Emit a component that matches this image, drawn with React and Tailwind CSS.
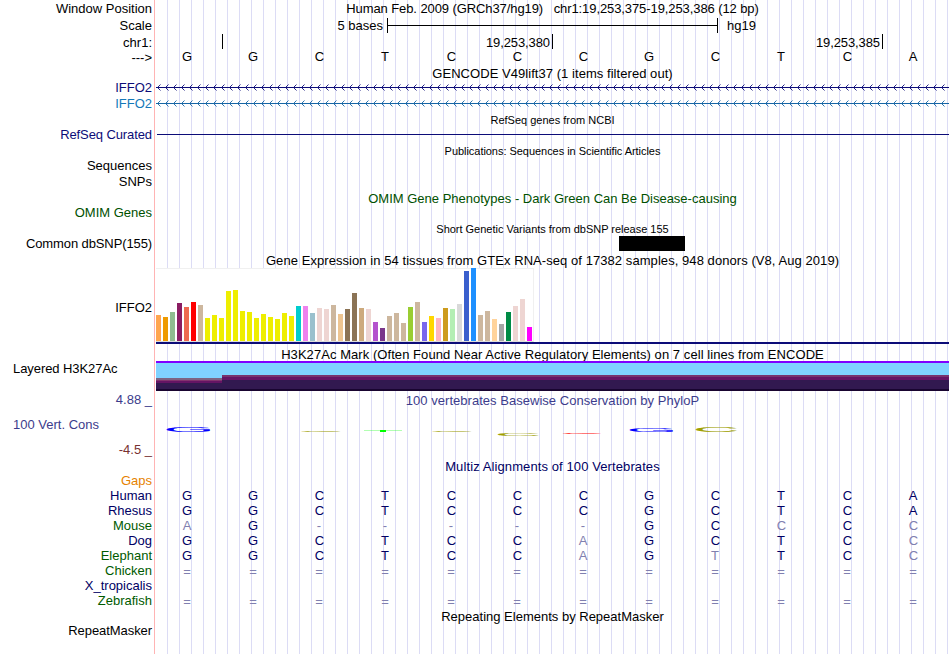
import React from 'react';

const BASES = 'GGCTCCCGCTCA';

const SPECIES = [
  { name: 'Human', color: 'text-[#000064]', seq: 'GGCTCCCGCTCA' },
  { name: 'Rhesus', color: 'text-[#000064]', seq: 'GGCTCCCGCTCA' },
  { name: 'Mouse', color: 'text-[#005a00]', seq: 'AG-----GCCCC' },
  { name: 'Dog', color: 'text-[#000064]', seq: 'GGCTCCAGCTCC' },
  { name: 'Elephant', color: 'text-[#005a00]', seq: 'GGCTCCAGTTCC' },
  { name: 'Chicken', color: 'text-[#005a00]', seq: '============' },
  { name: 'X_tropicalis', color: 'text-[#000064]', seq: '            ' },
  { name: 'Zebrafish', color: 'text-[#005a00]', seq: '============' },
];

// [height, color] for each GTEx tissue
const TISSUES = [
  [26, '#ffa54f'], [24, '#ee9a00'], [29, '#8fbc8f'], [38, '#8b1c62'], [34, '#ee6a50'], [39, '#ff0000'],
  [36, '#cdb79e'], [23, '#eeee00'], [26, '#eeee00'], [23, '#eeee00'], [50, '#eeee00'], [51, '#eeee00'],
  [30, '#eeee00'], [29, '#eeee00'], [23, '#eeee00'], [27, '#eeee00'], [24, '#eeee00'], [22, '#eeee00'],
  [28, '#eeee00'], [25, '#eeee00'], [35, '#00cdcd'], [35, '#ee82ee'], [28, '#9ac0cd'], [33, '#eed5d2'],
  [32, '#eed5d2'], [36, '#cdb79e'], [27, '#eec591'], [32, '#8b7355'], [48, '#8b7355'], [33, '#cdaa7d'],
  [32, '#eed5d2'], [19, '#b452cd'], [13, '#7a378b'], [25, '#cdb79e'], [28, '#cdb79e'], [18, '#cdb79e'],
  [34, '#9acd32'], [39, '#cdb79e'], [19, '#7a67ee'], [25, '#ffd700'], [23, '#ffb6c1'], [33, '#cd9b1d'],
  [32, '#b4eeb4'], [37, '#d9d9d9'], [70, '#3a5fcd'], [73, '#1e90ff'], [26, '#cdb79e'], [30, '#cdb79e'],
  [22, '#ffd39b'], [17, '#a6a6a6'], [29, '#008b45'], [35, '#eed5d2'], [42, '#eed5d2'], [14, '#ff00ff'],
];

// conservation logo letters, x and y relative to the track area
const LOGO = [
  { ch: 'G', x: 7.8, y: 40.9, sx: 5, sy: 0.54, color: '#0000ff' },
  { ch: 'C', x: 143, y: 41, sx: 4.7, sy: 0.08, color: '#a0a000' },
  { ch: 'C', x: 274, y: 41, sx: 4.7, sy: 0.08, color: '#a0a000' },
  { ch: 'C', x: 339, y: 45, sx: 4.9, sy: 0.33, color: '#a0a000' },
  { ch: 'C', x: 404, y: 43, sx: 4.7, sy: 0.07, color: '#ff0000' },
  { ch: 'G', x: 470.8, y: 41, sx: 5, sy: 0.34, color: '#0000ff' },
  { ch: 'C', x: 537, y: 41, sx: 4.9, sy: 0.54, color: '#a0a000' },
];

function Row({ label, labelClass = '', className = '', children }) {
  return (
    <div className={`flex items-center ${className}`}>
      <div className={`w-[156px] shrink-0 pr-[4px] text-right leading-4 ${labelClass}`}>{label}</div>
      <div className="flex h-full w-[793px] shrink-0 items-center">{children}</div>
    </div>
  );
}

function Title({ className = '', children }) {
  return <div className={`w-full text-center leading-4 whitespace-pre ${className}`}>{children}</div>;
}

function Sequence({ seq, aligned = false }) {
  return seq.split('').map((ch, i) => {
    const faded = aligned && ch !== BASES[i];
    return (
      <span
        key={i}
        className={`w-[66px] text-center leading-4 ${ch === 'C' ? 'pr-[3px]' : 'pr-1'} ${faded ? 'text-[#8080b0]' : ''} ${ch === '=' ? 'pt-[2px]' : ''}`}
      >
        {ch}
      </span>
    );
  });
}

function Strand({ color }) {
  return (
    <svg width="793" height="7" className="block" stroke={color} fill="none">
      <path d="M0 3.5H793" shapeRendering="crispEdges" />
      {Array.from({ length: 99 }, (_, i) => (
        <path key={i} d={`M${i * 8 + 4.5} 0.5L${i * 8 + 1.5} 3.5L${i * 8 + 4.5} 6.5`} strokeWidth="0.9" />
      ))}
    </svg>
  );
}

function Expression() {
  return (
    <div className="flex h-full w-full flex-col">
      <div className="flex h-[74px] w-[378px] items-end gap-[2px] border-t border-r border-b border-[#f0f0f0] border-b-[#dcdcdc] bg-white">
        {TISSUES.map(([height, color], i) => (
          <div key={i} className="w-[5px] shrink-0" style={{ height, backgroundColor: color }} />
        ))}
      </div>
      <div className="h-[2px] w-full bg-[#0c0c78]" />
    </div>
  );
}

function Histone() {
  return (
    <div className="flex h-full w-full flex-col">
      <div className="h-[2px] bg-[#8000ff]" />
      <div className="flex h-[26px]">
        <div className="flex w-[66px] flex-col">
          <div className="h-[15px] bg-[#80d2ff]" />
          <div className="h-[2px] bg-[#7d6482]" />
          <div className="h-px bg-[#82326e]" />
          <div className="h-[2px] bg-[#641464]" />
          <div className="flex-1 bg-[#321950]" />
        </div>
        <div className="flex flex-1 flex-col">
          <div className="h-[12px] bg-[#80d2ff]" />
          <div className="h-[2px] bg-[#78326e]" />
          <div className="h-[3px] bg-[#641464]" />
          <div className="flex-1 bg-[#321950]" />
        </div>
      </div>
      <div className="h-[2px] bg-[#190530]" />
    </div>
  );
}

function Conservation() {
  return (
    <div className="flex h-[65px]">
      <div className="flex w-[156px] shrink-0 flex-col pr-[4px] text-right leading-4">
        <div className="mt-px text-[#3c3c8c]">4.88 _</div>
        <div className="mt-[9px] pl-[13px] text-left text-[#3c3c8c]">100 Vert. Cons</div>
        <div className="mt-[9px] text-[#783232]">-4.5 _</div>
      </div>
      <div className="w-[793px]">
        <Title className="pt-[2px] tracking-[0.03px] text-[#3c3c8c]">100 vertebrates Basewise Conservation by PhyloP</Title>
        <svg width="793" height="47" viewBox="0 18 793 47" className="block">
          {LOGO.map((l) => (
            <text
              key={l.x}
              transform={`translate(${l.x} ${l.y}) scale(${l.sx} ${l.sy})`}
              fill={l.color}
              stroke={l.color}
              strokeWidth="0.15"
              fontSize="13"
            >
              {l.ch}
            </text>
          ))}
          <path d="M208 39.5H246" stroke="#00ff00" strokeOpacity="0.3" />
          <rect x="224" y="39" width="6" height="2" fill="#00ff00" />
        </svg>
      </div>
    </div>
  );
}

export default function App() {
  return (
    <div className="flex h-[654px] w-[950px] overflow-hidden bg-white font-['Liberation_Sans',Arial,sans-serif] text-[13px] text-black">
      <div className="w-[154px] shrink-0 border-r border-[#ffb4b4] box-content" />
      <div className="ml-px w-[793px] shrink-0 bg-[repeating-linear-gradient(to_right,transparent_0,transparent_11px,#dcdcf5_11px,#dcdcf5_12px)]" />
      <main className="-ml-[949px] w-[949px] shrink-0">
        <Row label="Window Position" className="h-[17px]">
          <Title className="tracking-[-0.09px]">{'Human Feb. 2009 (GRCh37/hg19)   chr1:19,253,375-19,253,386 (12 bp)'}</Title>
        </Row>
        <Row label="Scale" className="h-[17px]">
          <span className="w-[231px] pr-[4px] text-right leading-4">5 bases</span>
          <div className="flex h-[15px] w-[331px] items-center border-x border-black">
            <div className="h-px w-full bg-black" />
          </div>
          <span className="pl-[9px] leading-4">hg19</span>
        </Row>
        <Row label="chr1:" className="h-[17px]">
          <div className="mb-[2px] h-[15px] w-[67px] border-r border-black" />
          <div className="mb-[2px] h-[15px] w-[330px] border-r border-black pr-[2px] text-right leading-[18px] tracking-[-0.1px]">19,253,380</div>
          <div className="mb-[2px] h-[15px] w-[330px] border-r border-black pr-[2px] text-right leading-[18px] tracking-[-0.1px]">19,253,385</div>
        </Row>
        <Row label="--->" labelClass="pt-[3px]" className="h-[11px]">
          <Sequence seq={BASES} />
        </Row>
        <Row className="h-[18px]">
          <Title className="pt-[5px] tracking-[0.05px]">GENCODE V49lift37 (1 items filtered out)</Title>
        </Row>
        <Row label="IFFO2" labelClass="text-[#0c0c78]" className="h-[15px]">
          <Strand color="#0c0c78" />
        </Row>
        <Row label="IFFO2" labelClass="text-[#1478b9]" className="h-[17px]">
          <Strand color="#1666a5" />
        </Row>
        <Row className="h-[16px]">
          <Title className="text-[11px]">RefSeq genes from NCBI</Title>
        </Row>
        <Row label="RefSeq Curated" labelClass="text-[#0c0c78] tracking-[-0.1px]" className="h-[13px]">
          <div className="ml-px h-px w-full bg-[#0c0c78]" />
        </Row>
        <Row className="h-[16px]">
          <Title className="pt-[3px] text-[11px] tracking-[-0.04px]">Publications: Sequences in Scientific Articles</Title>
        </Row>
        <Row label="Sequences" className="h-[17px]" />
        <Row label="SNPs" className="h-[15px]" />
        <Row className="h-[17px]">
          <Title className="pt-[2px] text-[#005000]">OMIM Gene Phenotypes - Dark Green Can Be Disease-causing</Title>
        </Row>
        <Row label="OMIM Genes" labelClass="text-[#005000]" className="h-[13px]" />
        <Row className="h-[17px]">
          <Title className="pt-[2px] text-[11px] tracking-[-0.02px]">Short Genetic Variants from dbSNP release 155</Title>
        </Row>
        <Row label="Common dbSNP(155)" labelClass="tracking-[-0.11px]" className="h-[15px]">
          <div className="ml-[463px] h-[15px] w-[66px] bg-black" />
        </Row>
        <Row className="h-[17px]">
          <Title className="pt-[2px] tracking-[0.065px]">
            Gene Expression in 54 tissues from GTEx RNA-seq of 17382 samples, 948 donors (V8, Aug 2019)
          </Title>
        </Row>
        <Row label="IFFO2" labelClass="pt-[3px]" className="h-[76px]">
          <Expression />
        </Row>
        <Row className="h-[17px]">
          <Title className="pt-[4px] tracking-[0.06px]">H3K27Ac Mark (Often Found Near Active Regulatory Elements) on 7 cell lines from ENCODE</Title>
        </Row>
        <Row label={<div className="-mt-[15px] pl-[13px] text-left tracking-[-0.07px]">Layered H3K27Ac</div>} className="h-[30px]">
          <Histone />
        </Row>
        <Conservation />
        <Row className="h-[17px]">
          <Title className="pt-[4px] tracking-[0.1px] text-[#000064]">Multiz Alignments of 100 Vertebrates</Title>
        </Row>
        <Row label="Gaps" labelClass="text-[#e68200]" className="h-[15px]" />
        {SPECIES.map((s) => (
          <Row key={s.name} label={s.name} labelClass={s.color} className="h-[15px] text-[#000064]">
            <Sequence seq={s.seq} aligned />
          </Row>
        ))}
        <Row className="h-[16px]">
          <Title className="pt-[1px]">Repeating Elements by RepeatMasker</Title>
        </Row>
        <Row label="RepeatMasker" labelClass="tracking-[-0.07px]" className="h-[14px]" />
      </main>
    </div>
  );
}
